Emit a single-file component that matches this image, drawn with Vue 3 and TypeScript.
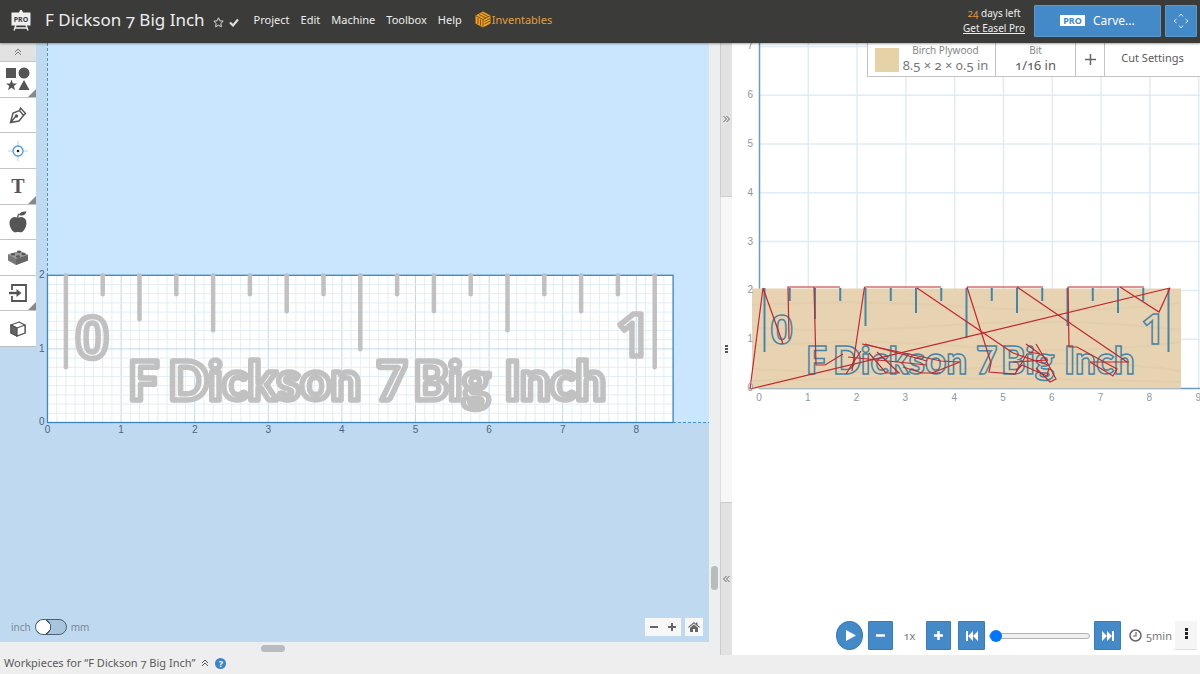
<script setup lang="ts">
import { ref } from 'vue'

interface Tool { id: string; label: string; more: boolean }

const menu: string[] = ['Project', 'Edit', 'Machine', 'Toolbox', 'Help']
const tools: Tool[] = [
  { id: 'shapes', label: 'Shapes', more: true },
  { id: 'pen', label: 'Pen', more: false },
  { id: 'drill', label: 'Drill', more: false },
  { id: 'text', label: 'Text', more: true },
  { id: 'icons', label: 'Icons', more: false },
  { id: 'apps', label: 'Apps', more: false },
  { id: 'import', label: 'Import', more: true },
  { id: 'box', label: '3D', more: false },
]

const metric = ref(false)
const progress = ref(0)

/* Design canvas: pixels per inch, y grows downwards from the top of the workpiece */
const unit = 73.6
const boardW = unit * 8.5
const boardH = unit * 2
const minorX = Array.from({ length: 67 }, (_, i) => (i + 1) * unit / 8)
const minorY = Array.from({ length: 15 }, (_, i) => boardH - (i + 1) * unit / 8)
const depths = [94, 21, 46, 21, 57, 21, 38, 21, 76, 21, 38, 21, 57, 21, 38, 21, 94]
const ticks = depths.map((d, i) => ({ x: unit * (0.25 + i * 0.5), d }))

/* Tool path preview */
const pu = 48.8
const previewDepths = [64, 13, 31, 13, 38, 13, 25, 13, 50, 13, 25, 13, 38, 13, 25, 13, 64]
const previewTicks = previewDepths.map((d, i) => ({ x: 32.5 + i * 25.25, d }))
const moves: string[] = [
  'M18 346L31 245L51 301L44 281', 'M18 346L438 245', 'M57 296L56 244H108',
  'M82 244L84 322H93L111 311', 'M132.500 244H209', 'M132.500 244L120 328',
  'M185 245L281 310', 'M130 301L209 318L228 319L200 330', 'M133 301L195 318',
  'M137 310L154 330L167 330L145 309', 'M116 314L195 322', 'M114 331L121 320L129 308',
  'M171 324L190 330H208', 'M235 244H311',
  'M235 244L259 320L257 329L283 331L295 311', 'M285 244L395 319', 'M336 244H412',
  'M336 244L337 304H345L385 326L381 333L358 319', 'M358 319H397', 'M388 244L427 269L438 245',
  'M294 301L308 311L297 309', 'M304 301L316 321L324 336L318 339L304 325', 'M281 319L315 317L309 311',
  'M284 328L290 322L315 333L317 325', 'M281 310L316 322',
]
</script>

<template>
  <div class="app">
    <header class="topbar">
      <a href="#" class="logo" aria-label="Easel Pro">
        <svg width="20" height="21" viewBox="0 0 20 21">
          <path d="M10 0l1.500 3h-3zM5 15l-2 5.500M15 15l2 5.500M4 18h12" stroke="#eee" stroke-width="1.400" fill="#eee" />
          <rect x="0.500" y="2.500" width="19" height="13" fill="#eee" />
          <text x="10" y="11.500" text-anchor="middle" class="logo-text">PRO</text>
        </svg>
      </a>
      <h1>F Dickson 7 Big Inch</h1>
      <button class="bare star" aria-label="Favorite">
        <svg width="11" height="11" viewBox="0 0 11 11"><path d="M5.500 .8l1.400 3 3.300.4-2.400 2.300.6 3.300-2.900-1.600-2.900 1.600.6-3.300L.8 4.200l3.300-.4z" fill="none" stroke="#ddd" /></svg>
      </button>
      <svg class="check" width="10" height="9" viewBox="0 0 10 9"><path d="M1 4.500l3 3 5-6" fill="none" stroke="#ddd" stroke-width="2.200" /></svg>
      <nav>
        <a v-for="m in menu" :key="m" href="#">{{ m }}</a>
        <a href="#" class="inv">
          <svg width="16" height="17" viewBox="0 0 16 17">
            <path d="M8 .5l7.500 4v8L8 16.500.5 12.500v-8z" fill="#f0a01e" />
            <path d="M8 8.500v8M8 8.500L.5 4.500M8 8.500l7.500-4M3 7v6M5.500 8.500v6M4 3.500l7 3.500M6.500 2l6.500 3.500M9.500 10.500l5.500-3M9.500 13l5.500-3" stroke="#6b4c16" stroke-width=".9" fill="none" />
          </svg>Inventables
        </a>
      </nav>
      <div class="trial">
        <span><b>24</b> days left</span>
        <a href="#">Get Easel Pro</a>
      </div>
      <button class="carve"><span class="pro">PRO</span>Carve...</button>
      <button class="jog" aria-label="Jog machine">
        <svg width="16" height="16" viewBox="0 0 16 16" fill="none" stroke="#dbe9f5"><path d="M6 3.500l2-2.500 2 2.500M6 12.500l2 2.500 2-2.500M3.500 6L1 8l2.500 2M12.500 6L15 8l-2.500 2" /></svg>
      </button>
    </header>

    <main>
      <aside class="toolbar">
        <button class="collapse" aria-label="Collapse tools">
          <svg width="8" height="8" viewBox="0 0 8 8" fill="none" stroke="#777"><path d="M1 4l3-3 3 3M1 7l3-3 3 3" /></svg>
        </button>
        <div class="tools">
          <button v-for="t in tools" :key="t.id" :class="{ more: t.more }" :aria-label="t.label">
            <svg v-if="t.id === 'shapes'" width="24" height="24" viewBox="0 0 24 24" fill="#555">
              <path d="M0 1h10v10H0zM5.500 12.500l1.500 4h4.200l-3.300 2.600 1.200 4.200-3.600-2.500L2 23.300l1.200-4.200L0 16.500h4zM18 13l5.500 10h-11z" /><circle cx="18" cy="6" r="5.500" />
            </svg>
            <svg v-else-if="t.id === 'pen'" width="18" height="18" viewBox="0 0 18 18" fill="none" stroke="#555" stroke-width="1.400">
              <path d="M1.500 16.500L4 7l6.500-2.500 4 5-4.500 5.500zM10.500 4.500L11.500 2l5 5.500-2 2M2 16l5-6" /><circle cx="7.500" cy="10" r="1" fill="#555" />
            </svg>
            <svg v-else-if="t.id === 'drill'" width="20" height="20" viewBox="0 0 20 20" fill="none">
              <path d="M10 0v20M0 10h20" stroke="#b5d3ec" /><circle cx="10" cy="10" r="5" fill="#fff" stroke="#4a9ae0" stroke-width="1.300" /><circle cx="10" cy="10" r="1.300" fill="#222" />
            </svg>
            <span v-else-if="t.id === 'text'" class="glyph">T</span>
            <svg v-else-if="t.id === 'icons'" width="18" height="22" viewBox="0 0 18 22" fill="#555">
              <path d="M9 7c2-1 4-1.500 6 0 3 2 3 6 1.500 9.500C15 20 13 22 11 21.300c-1.500-.5-2.500-.5-4 0C5 22 3 20 1.500 16.500 0 13 0 9 3 7c2-1.500 4-1 6 0z" /><path d="M8 7c0-2 .5-3 1.500-4.500l1 .5C9.500 4.500 9.500 5.500 9.500 7zM10 4c1-3 4-4 7.500-3.500C16.500 4 14 5.500 10 4z" />
            </svg>
            <svg v-else-if="t.id === 'apps'" width="20" height="15" viewBox="0 0 20 15">
              <path d="M0 4.500L12 1l8 4v5.500L8 15 0 10.500z" fill="#777" /><path d="M0 4.500L12 1l8 4-12 4z" fill="#999" /><path d="M8 9v6l12-4.500V5z" fill="#666" />
              <g fill="#555"><ellipse cx="5" cy="4.200" rx="2" ry="1.300" /><ellipse cx="10" cy="6.500" rx="2" ry="1.300" /><ellipse cx="11" cy="1.800" rx="2" ry="1.300" /><ellipse cx="15.500" cy="4" rx="2" ry="1.300" /></g>
            </svg>
            <svg v-else-if="t.id === 'import'" width="18" height="18" viewBox="0 0 18 18" fill="none" stroke="#555" stroke-width="1.800">
              <path d="M3 6V1h14v16H3v-5" /><path d="M0 9h8" stroke-width="2.400" /><path d="M7.500 5l5 4-5 4z" fill="#555" stroke="none" />
            </svg>
            <svg v-else width="16" height="16" viewBox="0 0 16 16" fill="none" stroke="#555" stroke-width="1.300" stroke-linejoin="round">
              <path d="M1 4l8-3 6 3v8l-8 3-6-3z" /><path d="M1 4l6 3 8-3v8l-8 3z" fill="#fff" /><path d="M1 4l6 3v8l-6-3z" fill="#666" />
            </svg>
          </button>
        </div>
      </aside>

      <section class="design">
        <svg class="scene" aria-label="Design">
          <rect x="10" y="0" width="100%" height="379" fill="#cae6ff" />
          <path d="M10.500 0V232M636 379.500H672" stroke="#4b93cf" stroke-dasharray="3 2" />
          <g transform="translate(10.500 232.300)">
            <rect :width="boardW" :height="boardH" fill="#fff" />
            <line v-for="(x, i) in minorX" :key="'x' + i" :x1="x" :x2="x" y1="0" :y2="boardH" :stroke="i % 8 === 7 ? '#bcdaf0' : '#e3eef6'" />
            <line v-for="(y, i) in minorY" :key="'y' + i" :y1="y" :y2="y" x1="0" :x2="boardW" :stroke="i % 8 === 7 ? '#bcdaf0' : '#e3eef6'" />
            <rect :width="boardW" :height="boardH" fill="none" stroke="#3a86c5" stroke-width="1.300" />
            <line v-for="(t, i) in ticks" :key="'t' + i" :x1="t.x" :x2="t.x" y1="0" :y2="t.d - 2" stroke="#c1c1c1" stroke-width="4.500" stroke-linecap="round" />
            <g class="carving">
              <text class="zero" x="28" y="83">0</text>
              <text class="one" x="569" y="81">1</text>
              <text class="word" y="125"><tspan x="81">F </tspan><tspan x="121">Dickson </tspan><tspan x="329">7 </tspan><tspan x="366">Big </tspan><tspan x="457">Inch</tspan></text>
            </g>
            <g class="ruler">
              <text v-for="n in 9" :key="n" :x="(n - 1) * unit" y="158" text-anchor="middle">{{ n - 1 }}</text>
              <text v-for="n in 3" :key="'v' + n" x="-3" :y="boardH - (n - 1) * unit + 3" text-anchor="end">{{ n - 1 }}</text>
            </g>
          </g>
        </svg>
        <div class="units">
          <label for="units">inch</label>
          <input id="units" v-model="metric" type="checkbox" />
          <label for="units">mm</label>
        </div>
        <div class="zoom">
          <div class="pair">
            <button aria-label="Zoom out"><svg width="10" height="10"><path d="M1 5h8" stroke="#666" stroke-width="2" /></svg></button>
            <button aria-label="Zoom in"><svg width="10" height="10"><path d="M1 5h8M5 1v8" stroke="#666" stroke-width="2" /></svg></button>
          </div>
          <button class="home" aria-label="Home"><svg width="12" height="10" viewBox="0 0 12 10" fill="#666"><path d="M6 2.500l4 3.300V10H7V7H5v3H2V5.800zM6 0l2 1.700V.5h1.500V3L12 5l-.7.800L6 1.600.7 5.800 0 5z" /></svg></button>
        </div>
      </section>
      <div class="vscroll"><span class="thumb"></span></div>
      <div class="hscroll"><span class="thumb"></span></div>

      <div class="splitter">
        <button aria-label="Expand design"><svg width="7" height="8" viewBox="0 0 7 8" fill="none" stroke="#666"><path d="M.5 1l3 3-3 3M3.500 1l3 3-3 3" /></svg></button>
        <div class="grip"><i></i><i></i><i></i></div>
        <button aria-label="Expand preview"><svg width="7" height="8" viewBox="0 0 7 8" fill="none" stroke="#666"><path d="M3.500 1l-3 3 3 3M6.500 1l-3 3 3 3" /></svg></button>
      </div>

      <section class="preview">
        <svg class="scene" aria-label="Tool path preview">
          <g stroke="#dfecf5" stroke-width="1.500">
            <line v-for="n in 9" :key="n" :x1="27.500 + n * pu" :x2="27.500 + n * pu" y1="0" y2="345" />
            <line v-for="n in 7" :key="'h' + n" x1="27" x2="100%" :y1="345 - n * pu" :y2="345 - n * pu" />
          </g>
          <path d="M27.500 0V345.500H800" fill="none" stroke="#6a9cc4" stroke-width="1.500" />
          <rect x="20" y="245.500" width="429" height="100" fill="#e7d3b2" />
          <path d="M20 262q110-6 220 2t209-4M20 284q90 7 200-2t229 5M20 303q120-8 220 1t209-5M20 326q140 7 240-2t189 4M20 338q180-6 429 1" fill="none" stroke="#e0caa6" stroke-width="2" opacity=".5" />
          <line v-for="(t, i) in previewTicks" :key="i" :x1="t.x" :x2="t.x" y1="245" :y2="245 + t.d" stroke="#4585a8" stroke-width="2" />
          <g class="path">
            <text class="zero" x="38" y="301">0</text><text class="one" x="409" y="301">1</text>
            <text class="word" y="331"><tspan x="74">F </tspan><tspan x="101">Dickson </tspan><tspan x="244">7 </tspan><tspan x="269">Big </tspan><tspan x="332">Inch</tspan></text>
          </g>
          <path v-for="(m, i) in moves" :key="'m' + i" :d="m" fill="none" stroke="#c0272f" stroke-width="1.200" />
          <g class="ruler side">
            <text v-for="n in 10" :key="n" :x="27 + (n - 1) * pu" y="358" text-anchor="middle">{{ n - 1 }}</text>
            <text v-for="n in 8" :key="'v' + n" x="21" :y="348 - (n - 1) * pu" text-anchor="end">{{ n - 1 }}</text>
          </g>
        </svg>

        <div class="settings">
          <button class="material">
            <span class="swatch"></span>
            <span class="stack"><small>Birch Plywood</small><span>8.5 × 2 × 0.5 in</span></span>
          </button>
          <button class="bit"><span class="stack"><small>Bit</small><span>1/16 in</span></span></button>
          <button class="add" aria-label="Add bit"><svg width="11" height="11"><path d="M0 5.500h11M5.500 0v11" stroke="#666" stroke-width="1.500" /></svg></button>
          <button class="cut">Cut Settings</button>
        </div>

        <div class="player">
          <button class="blue play" aria-label="Play"><svg width="10" height="11"><path d="M0 0l10 5.500L0 11z" fill="#fff" /></svg></button>
          <button class="blue" aria-label="Slower"><svg width="9" height="9"><path d="M0 4.500h9" stroke="#fff" stroke-width="2.500" /></svg></button>
          <span class="rate">1x</span>
          <button class="blue" aria-label="Faster"><svg width="9" height="9"><path d="M0 4.500h9M4.500 0v9" stroke="#fff" stroke-width="2.500" /></svg></button>
          <button class="blue wide" aria-label="To start"><svg width="12" height="10" fill="#fff"><path d="M0 0h2v10H0zM7 0v10L2 5zM12 0v10L7 5z" /></svg></button>
          <input v-model="progress" type="range" min="0" max="100" aria-label="Simulation progress" />
          <button class="blue wide" aria-label="To end"><svg width="12" height="10" fill="#fff"><path d="M10 0h2v10h-2zM5 0v10l5-5zM0 0v10l5-5z" /></svg></button>
          <svg class="clock" width="13" height="13" viewBox="0 0 13 13" fill="none" stroke="#666" stroke-width="1.500"><circle cx="6.500" cy="6.500" r="5.500" /><path d="M7 3v4H4" stroke-width="1.200" /></svg>
          <span class="time">5min</span>
          <button class="kebab" aria-label="More"><i></i><i></i><i></i></button>
        </div>
      </section>
    </main>

    <footer>
      <span>Workpieces for “F Dickson 7 Big Inch”</span>
      <svg width="8" height="8" viewBox="0 0 8 8" fill="none" stroke="#555"><path d="M1 4l3-3 3 3M1 7l3-3 3 3" /></svg>
      <button class="help" aria-label="Help">?</button>
    </footer>
  </div>
</template>

<style>
body { margin: 0; }
</style>

<style scoped>
.app {
  display: flex;
  flex-direction: column;
  height: 100vh;
  font: 12px/16px "Noto Sans", "Open Sans", sans-serif;
  font-variant-numeric: oldstyle-nums;
  color: #5a5a5a;
  background: #fff;
  overflow: hidden;
}
button { font: inherit; color: inherit; border: 0; padding: 0; background: none; cursor: pointer; }
button, a { display: flex; align-items: center; justify-content: center; box-sizing: border-box; }
.topbar {
  position: relative;
  z-index: 2;
  flex: none;
  display: flex;
  align-items: center;
  height: 43px;
  padding: 0 3px 2px 11px;
  box-sizing: border-box;
  background: #3b3b39;
  box-shadow: 0 1px 2px rgba(0, 0, 0, .35);
  color: #eee;
}
.logo { margin-right: 14px; }
.logo-text { font: 700 7px "Noto Sans", sans-serif; fill: #3b3b39; }
h1 { margin: 0 8px 0 0; font-size: 17px; line-height: 24px; padding-bottom: 1px; font-weight: 400; white-space: nowrap; }
.star { margin: 3px 5px 0 0; }
.check { margin: 3px 15px 0 0; }
nav { display: flex; gap: 11px; font-size: 11px; padding-bottom: 2px; }
nav a { color: #eee; text-decoration: none; }
nav .inv { color: #e0a044; gap: 1px; margin-left: 2px; }
.trial { margin-left: auto; display: flex; flex-direction: column; align-items: center; font-size: 10px; line-height: 15px; margin-right: 9px; }
.trial b { font-weight: 400; color: #e0933a; }
.trial a { color: #eee; }
.carve, .jog { height: 32px; background: #4489c8; border: 1px solid #5a9ad3; color: #fff; border-radius: 1px; }
.carve { width: 127px; font-size: 12px; gap: 8px; margin-right: 4px; }
.jog { width: 32px; }
.pro { background: #fff; color: #4489c8; font-size: 9px; line-height: 11px; font-weight: 700; padding: 0 3px; }

main {
  flex: 1;
  min-height: 0;
  display: grid;
  grid-template-columns: 37px minmax(0, 672fr) 11px 12px minmax(0, 468fr);
  grid-template-rows: minmax(0, 1fr) 13px;
}
.toolbar { grid-area: 1 / 1; background: #bfdaf0; }
.collapse { width: 36px; height: 18px; background: #e2e2e2; }
.tools { display: flex; flex-direction: column; width: 36px; height: 285px; border-bottom: 1px solid #bbb; }
.tools button { position: relative; flex: 1; background: #fff; border-top: 1px solid #c4c4c4; }
.tools .more::after {
  content: "";
  position: absolute;
  right: 0;
  bottom: 0;
  border: 4px solid transparent;
  border-right-color: #888;
  border-bottom-color: #888;
}
.glyph { font: 700 20px/24px "Liberation Serif", serif; color: #555; }
.design { grid-area: 1 / 2; position: relative; background: #bfdaf0; }
.scene { display: block; width: 100%; height: 100%; overflow: hidden; }
.carving text { fill: none; stroke: #c1c1c1; stroke-width: 5.500px; stroke-linejoin: round; font-variant-numeric: normal; }
.word { font: 900 53px Lato, sans-serif; }
.one { font: 700 59px "Open Sans", sans-serif; }
.zero { font: 700 60px "Liberation Sans", sans-serif; }
.path text { fill: none; stroke: #4585a8; stroke-width: 1.500px; font-variant-numeric: normal; }
.path .word { font-size: 37px; }
.path .one { font-size: 42px; }
.path .zero { font-size: 42px; }
.ruler text { font: 10px "Liberation Sans", sans-serif; fill: #4a6580; }
.side text { fill: #8d97a3; }
.units { position: absolute; left: 0; bottom: 7px; display: flex; align-items: center; gap: 4px; font-size: 10px; color: #7d8791; margin-left: -26px; }
.units input {
  appearance: none;
  margin: 0;
  width: 32px;
  height: 16px;
  box-sizing: border-box;
  border: 1px solid #4b6075;
  border-radius: 8px;
  background: radial-gradient(circle at 7px 7px, #fff 7px, #4b6075 7px, #4b6075 8px, #a8c5de 8px);
}
.zoom { position: absolute; right: 6px; bottom: 6px; display: flex; gap: 4px; }
.pair { display: flex; }
.zoom button { width: 18px; height: 18px; background: #f7f7f7; }
.vscroll { grid-area: 1 / 3 / 3 / 4; position: relative; background: #eceef0; }
.hscroll { grid-area: 2 / 1 / 3 / 3; position: relative; background: #eceef0; }
.thumb { position: absolute; border-radius: 4px; background: #b9bcbe; }
.vscroll .thumb { top: 85.500%; left: 2px; width: 7px; height: 24px; }
.hscroll .thumb { left: 36.800%; top: 3px; width: 24px; height: 7px; }
.splitter { grid-area: 1 / 4 / 3 / 5; display: flex; flex-direction: column; background: #f7f7f7; }
.splitter button { flex: 1; background: #e2e2e2; border: 0 solid #ccc; border-width: 0 0 1px 1px; }
.grip { flex: 2; display: flex; flex-direction: column; align-items: center; justify-content: center; gap: 1px; border-left: 1px solid #ddd; }
.splitter button:last-child { border-width: 1px 0 0 1px; }
.grip i { width: 3px; height: 2px; background: #555; }
.preview { grid-area: 1 / 5 / 3 / 6; position: relative; background: #fff; }
.settings {
  position: absolute;
  top: 0;
  right: 0;
  display: flex;
  height: 34px;
  box-sizing: border-box;
  border: 1px solid #c4c4c4;
  border-width: 0 0 1px 1px;
  background: #fff;
}
.settings button + button { border-left: 1px solid #c4c4c4; }
.material { width: 127px; gap: 4px; color: #777; }
.swatch { width: 24px; height: 24px; background: #e5d2a6; }
.stack { display: flex; flex-direction: column; align-items: center; font-size: 13px; line-height: 17px; padding-bottom: 2px; white-space: nowrap; }
.stack small { font-size: 10px; line-height: 14px; color: #888; }
.bit { width: 80px; }
.add { width: 29px; }
.cut { width: 96px; padding-bottom: 3px; font-size: 11px; }
.player { position: absolute; right: 3px; bottom: 5px; display: flex; align-items: center; height: 29px; font-size: 11px; color: #777; }
.blue { width: 25px; height: 29px; background: #4489c8; border: 1px solid #3a7cba; border-radius: 1px; }
.play { width: 27px; border-radius: 50%; margin-right: 5px; padding-left: 2px; }
.rate { width: 33px; text-align: center; }
.wide { width: 27px; }
.rate + .blue { margin-right: 7px; }
.player input { appearance: none; width: 101px; height: 13px; margin: 0 4px; background: none; }
.player input::-webkit-slider-runnable-track { height: 6px; box-sizing: border-box; border: 1px solid #b2b2b2; border-radius: 3px; background: #efefef; }
.player input::-webkit-slider-thumb { appearance: none; width: 12px; height: 12px; margin-top: -4px; border-radius: 50%; background: #0075ff; }
.clock { margin: 0 4px 0 8px; }
.time { width: 29px; }
.kebab { flex-direction: column; gap: 1px; width: 22px; height: 29px; background: #f5f5f5; border-bottom: 1px solid #ddd; padding-bottom: 4px; }
.kebab i { width: 3px; height: 3px; background: #222; }
footer { flex: none; display: flex; align-items: center; gap: 6px; height: 19px; padding: 0 4px 3px; box-sizing: border-box; background: #eee; font-size: 11px; line-height: 16px; }
.help { width: 11px; height: 11px; border-radius: 50%; background: #3a85c8; color: #fff; font-size: 9px; line-height: 11px; font-weight: 700; }
</style>
